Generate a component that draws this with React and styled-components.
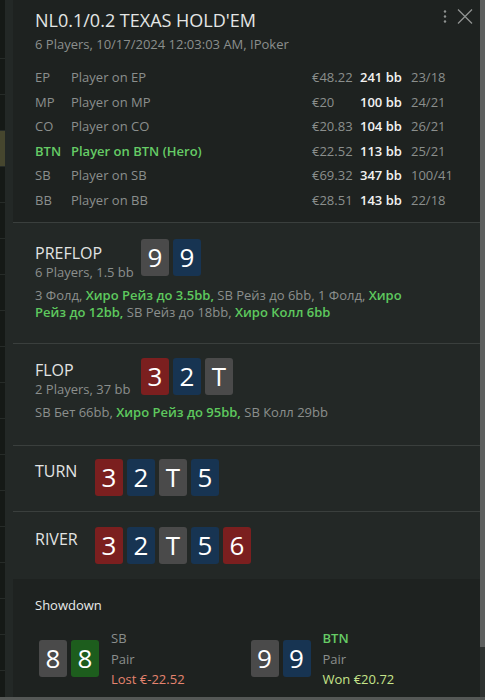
import React from "react";
import styled, { createGlobalStyle } from "styled-components";

const GlobalStyle = createGlobalStyle`
  body {
    margin: 0;
    background: #1c201e;
    font-family: "Open Sans", "Noto Sans", sans-serif;
  }
`;

const Screen = styled.div`
  width: 485px;
  height: 700px;
  display: flex;
  flex-direction: column;
  overflow: hidden;
  background: #1c201e;
`;

const Main = styled.div`
  flex: 1;
  display: flex;
  min-height: 0;
`;

const BottomBar = styled.div`
  height: 3px;
  background: #555856;
`;

const BackApp = styled.div`
  width: 5px;
  background: #151916;
  padding-top: 23px;
  display: flex;
  flex-direction: column;
`;

const BackCell = styled.div`
  height: 36px;
  flex-shrink: 0;
  box-sizing: border-box;
  border-bottom: 1px solid #262b28;
  background: ${({ $hl }) => ($hl ? "#46462e" : "transparent")};
`;

const Panel = styled.div`
  flex: 1;
  background: #232826;
  padding-left: 8px;
  display: flex;
  flex-direction: column;
  min-width: 0;
`;

const ScrollTrack = styled.div`
  width: 5px;
  background: #2e3230;
`;

const ScrollThumb = styled.div`
  height: 647px;
  background: #5d5f5e;
`;

const Header = styled.div`
  background: #1e2220;
  border-bottom: 1px solid #3a3f3d;
  padding: 8px 6px 10px 22px;
`;

const TitleRow = styled.div`
  display: flex;
  justify-content: space-between;
  align-items: flex-start;
`;

const Title = styled.div`
  font-size: 18px;
  line-height: 24px;
  color: #e4e6e5;
`;

const Actions = styled.div`
  display: flex;
  align-items: center;
  gap: 8px;
`;

const IconButton = styled.button`
  background: none;
  border: none;
  padding: 0;
  display: flex;
  color: #8f9391;
  cursor: pointer;
`;

const Subtitle = styled.div`
  margin-top: 3px;
  font-size: 13px;
  line-height: 18px;
  color: #8b8f8d;
`;

const Players = styled.div`
  margin-top: 12px;
  display: grid;
  grid-template-columns: 36px 241px 48px 51px auto;
  grid-auto-rows: 24.5px;
  align-items: center;
  font-size: 13px;
`;

const Cell = styled.div`
  color: ${({ $hero, $strong }) =>
    $hero ? "#66cc66" : $strong ? "#f2f2f2" : "#8b8f8d"};
  font-weight: ${({ $hero, $strong }) => ($hero || $strong ? 600 : 400)};
  white-space: nowrap;
`;

const Street = styled.div`
  border-bottom: ${({ $last }) => ($last ? "none" : "1px solid #3a3f3d")};
  padding: ${({ $pt }) => $pt}px 22px ${({ $pb }) => $pb}px;
`;

const StreetTop = styled.div`
  display: flex;
  align-items: flex-start;
`;

const StreetLabel = styled.div`
  width: ${({ $w }) => $w}px;
  margin-top: ${({ $mt }) => $mt}px;
  flex-shrink: 0;
`;

const StreetName = styled.div`
  font-size: 16px;
  line-height: 20px;
  color: #e2e4e3;
`;

const StreetInfo = styled.div`
  font-size: 13px;
  line-height: 18px;
  color: #8b8f8d;
`;

const Cards = styled.div`
  display: flex;
  gap: 4px;
`;

const cardColors = {
  grey: "#4a4a4a",
  blue: "#173452",
  red: "#7b1f1f",
  green: "#1d5d1d",
};

const Card = styled.div`
  width: 28px;
  height: 37px;
  border-radius: 3px;
  background: ${({ $c }) => cardColors[$c]};
  color: #ffffff;
  font-size: 26px;
  line-height: 37px;
  text-align: center;
`;

const ActionText = styled.div`
  margin-top: 6px;
  max-width: 380px;
  font-size: 13px;
  line-height: 17px;
  color: #8b8f8d;
`;

const Hero = styled.span`
  color: #5ec95e;
  font-weight: 600;
`;

const Showdown = styled.div`
  flex: 1;
  background: #1e2220;
  padding: 17px 22px 4px;
`;

const ShowdownTitle = styled.div`
  font-size: 13px;
  line-height: 18px;
  color: #e8eae9;
`;

const Hands = styled.div`
  margin-top: 14px;
  display: grid;
  grid-template-columns: 1fr 1fr;
`;

const Hand = styled.div`
  display: flex;
  align-items: center;
  padding-left: 4px;
  gap: 12px;
`;

const HandInfo = styled.div`
  font-size: 13px;
  line-height: 20.5px;
  color: #8b8f8d;
`;

const HandPos = styled.div`
  color: ${({ $hero }) => ($hero ? "#66cc66" : "#8b8f8d")};
  font-weight: ${({ $hero }) => ($hero ? 600 : 400)};
`;

const Result = styled.div`
  color: ${({ $won }) => ($won ? "#c6e48a" : "#e5846f")};
`;

const players = [
  ["EP", "Player on EP", "€48.22", "241 bb", "23/18"],
  ["MP", "Player on MP", "€20", "100 bb", "24/21"],
  ["CO", "Player on CO", "€20.83", "104 bb", "26/21"],
  ["BTN", "Player on BTN (Hero)", "€22.52", "113 bb", "25/21", true],
  ["SB", "Player on SB", "€69.32", "347 bb", "100/41"],
  ["BB", "Player on BB", "€28.51", "143 bb", "22/18"],
];

const DotsIcon = () => (
  <svg width="6" height="16" viewBox="0 0 6 16">
    <circle cx="3" cy="2.5" r="1.2" fill="currentColor" />
    <circle cx="3" cy="7.5" r="1.2" fill="currentColor" />
    <circle cx="3" cy="12.5" r="1.2" fill="currentColor" />
  </svg>
);

const CloseIcon = () => (
  <svg width="18" height="18" viewBox="0 0 18 18">
    <path d="M2 1.5 L16 15.5 M16 1.5 L2 15.5" stroke="currentColor" strokeWidth="1.3" fill="none" />
  </svg>
);

const CardRow = ({ cards }) => (
  <Cards>
    {cards.map(([v, c], i) => (
      <Card key={i} $c={c}>
        {v}
      </Card>
    ))}
  </Cards>
);

const board = [
  ["3", "red"],
  ["2", "blue"],
  ["T", "grey"],
  ["5", "blue"],
  ["6", "red"],
];

const App = () => {
  return (
    <>
      <GlobalStyle />
      <Screen>
        <Main>
          <BackApp>
            {Array.from({ length: 19 }).map((_, i) => (
              <BackCell key={i} $hl={i === 3} />
            ))}
          </BackApp>
          <Panel>
            <Header>
              <TitleRow>
                <Title>NL0.1/0.2 TEXAS HOLD'EM</Title>
                <Actions>
                  <IconButton>
                    <DotsIcon />
                  </IconButton>
                  <IconButton>
                    <CloseIcon />
                  </IconButton>
                </Actions>
              </TitleRow>
              <Subtitle>6 Players, 10/17/2024 12:03:03 AM, IPoker</Subtitle>
              <Players>
                {players.map(([pos, name, stack, bb, stats, hero]) => (
                  <React.Fragment key={pos}>
                    <Cell $hero={hero}>{pos}</Cell>
                    <Cell $hero={hero}>{name}</Cell>
                    <Cell>{stack}</Cell>
                    <Cell $strong>{bb}</Cell>
                    <Cell>{stats}</Cell>
                  </React.Fragment>
                ))}
              </Players>
            </Header>

            <Street $pt={16} $pb={22}>
              <StreetTop>
                <StreetLabel $w={106} $mt={4}>
                  <StreetName>PREFLOP</StreetName>
                  <StreetInfo>6 Players, 1.5 bb</StreetInfo>
                </StreetLabel>
                <CardRow cards={[["9", "grey"], ["9", "blue"]]} />
              </StreetTop>
              <ActionText>
                3 Фолд, <Hero>Хиро Рейз до 3.5bb,</Hero> SB Рейз до 6bb, 1 Фолд,{" "}
                <Hero>Хиро Рейз до 12bb,</Hero> SB Рейз до 18bb, <Hero>Хиро Колл 6bb</Hero>
              </ActionText>
            </Street>

            <Street $pt={14} $pb={24}>
              <StreetTop>
                <StreetLabel $w={106} $mt={2}>
                  <StreetName>FLOP</StreetName>
                  <StreetInfo>2 Players, 37 bb</StreetInfo>
                </StreetLabel>
                <CardRow cards={board.slice(0, 3)} />
              </StreetTop>
              <ActionText>
                SB Бет 66bb, <Hero>Хиро Рейз до 95bb,</Hero> SB Колл 29bb
              </ActionText>
            </Street>

            <Street $pt={13} $pb={15}>
              <StreetTop>
                <StreetLabel $w={60} $mt={2}>
                  <StreetName>TURN</StreetName>
                </StreetLabel>
                <CardRow cards={board.slice(0, 4)} />
              </StreetTop>
            </Street>

            <Street $pt={15} $pb={15} $last>
              <StreetTop>
                <StreetLabel $w={60} $mt={2}>
                  <StreetName>RIVER</StreetName>
                </StreetLabel>
                <CardRow cards={board} />
              </StreetTop>
            </Street>

            <Showdown>
              <ShowdownTitle>Showdown</ShowdownTitle>
              <Hands>
                <Hand>
                  <CardRow cards={[["8", "grey"], ["8", "green"]]} />
                  <HandInfo>
                    <HandPos>SB</HandPos>
                    <div>Pair</div>
                    <Result>Lost €-22.52</Result>
                  </HandInfo>
                </Hand>
                <Hand>
                  <CardRow cards={[["9", "grey"], ["9", "blue"]]} />
                  <HandInfo>
                    <HandPos $hero>BTN</HandPos>
                    <div>Pair</div>
                    <Result $won>Won €20.72</Result>
                  </HandInfo>
                </Hand>
              </Hands>
            </Showdown>
          </Panel>
          <ScrollTrack>
            <ScrollThumb />
          </ScrollTrack>
        </Main>
        <BottomBar />
      </Screen>
    </>
  );
};

export default App;
